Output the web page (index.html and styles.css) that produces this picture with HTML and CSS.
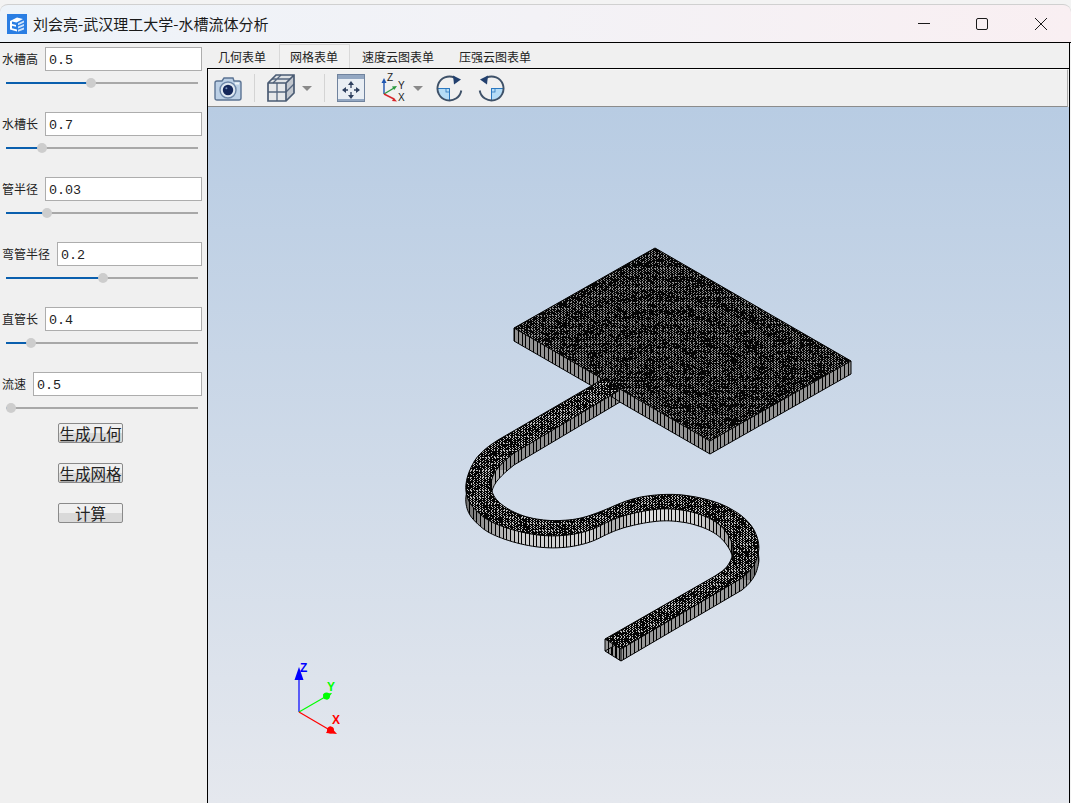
FILE: index.html
```html
<!DOCTYPE html>
<html lang="zh">
<head>
<meta charset="utf-8">
<title>水槽流体分析</title>
<link rel="stylesheet" href="styles.css">
</head>
<body>
<div class="window">
  <header class="titlebar">
    <svg class="app-icon" width="20" height="20" viewBox="0 0 20 20">
      <rect width="20" height="20" fill="#2a7ee3"/>
      <path d="M3 7 10 3.500 16 5 9.500 8.500 5 7.500V10l4 1v1.800l-4-1v2.400l5 1.300V17.500L3 15.500z" fill="#fff"/>
      <path d="M11 9.300 17 6.500V8.500L11 11.300zM11 12.500l6-2.500v2l-6 2.500zM11 15.800l6-2.300v2l-6 2.300z" fill="#cfe3fa"/>
    </svg>
    <span class="title">刘会亮-武汉理工大学-水槽流体分析</span>
    <div class="controls">
      <svg width="12" height="12" viewBox="0 0 12 12" class="ctl"><path d="M0 5.500H12" stroke="#1a1a1a" fill="none"/></svg>
      <svg width="12" height="12" viewBox="0 0 12 12" class="ctl"><rect x=".5" y=".5" width="11" height="11" rx="1.500" stroke="#1a1a1a" fill="none"/></svg>
      <svg width="12" height="12" viewBox="0 0 12 12" class="ctl"><path d="M0 0 12 12M12 0 0 12" stroke="#1a1a1a" fill="none"/></svg>
    </div>
  </header>
  <div class="content">
    <aside class="side">
      <div class="param">
        <div class="field"><label class="lbl">水槽高</label><div class="val">0.5</div></div>
        <div class="slider"><i class="fill" style="width:85px"></i><i class="thumb" style="left:80px"></i></div>
      </div>
      <div class="param">
        <div class="field"><label class="lbl">水槽长</label><div class="val">0.7</div></div>
        <div class="slider"><i class="fill" style="width:36px"></i><i class="thumb" style="left:31px"></i></div>
      </div>
      <div class="param">
        <div class="field"><label class="lbl">管半径</label><div class="val">0.03</div></div>
        <div class="slider"><i class="fill" style="width:41px"></i><i class="thumb" style="left:36px"></i></div>
      </div>
      <div class="param">
        <div class="field"><label class="lbl">弯管半径</label><div class="val">0.2</div></div>
        <div class="slider"><i class="fill" style="width:97px"></i><i class="thumb" style="left:92px"></i></div>
      </div>
      <div class="param">
        <div class="field"><label class="lbl">直管长</label><div class="val">0.4</div></div>
        <div class="slider"><i class="fill" style="width:25px"></i><i class="thumb" style="left:20px"></i></div>
      </div>
      <div class="param">
        <div class="field"><label class="lbl">流速</label><div class="val">0.5</div></div>
        <div class="slider"><i class="fill" style="width:5px"></i><i class="thumb" style="left:0"></i></div>
      </div>
      <div class="actions">
        <button class="btn">生成几何</button>
        <button class="btn">生成网格</button>
        <button class="btn">计算</button>
      </div>
    </aside>
    <main class="main">
      <nav class="tabs">
        <span class="tab">几何表单</span>
        <span class="tab active">网格表单</span>
        <span class="tab">速度云图表单</span>
        <span class="tab">压强云图表单</span>
      </nav>
      <section class="pane">
        <div class="toolbar">
          <svg class="ic cam" width="28" height="25" viewBox="0 0 28 25">
            <path d="M3 5h5l2-3h9l1 3h5q2 0 2 2v15q0 2-2 2H3q-2 0-2-2V7q0-2 2-2z" fill="#bcd0e6" stroke="#5b7393" stroke-width="1.400"/>
            <rect x="21" y="6.500" width="4" height="2" fill="#eef3f8"/>
            <circle cx="14" cy="14" r="8" fill="#dfe8f2" stroke="#6c86a8" stroke-width="1.400"/>
            <circle cx="14" cy="14" r="5.200" fill="#14275a"/>
            <circle cx="12.400" cy="12.200" r="1" fill="#7f96bd"/>
          </svg>
          <i class="sep s1"></i>
          <svg class="ic cube" width="28" height="28" viewBox="0 0 28 28">
            <path d="M1 9 9 1h18v18l-8 8H1z" fill="#dfe2e5"/>
            <path d="M1 9h18v18H1z" fill="#e6e8ea"/>
            <path d="M19 9l8-8v18l-8 8z" fill="#c2c7ce"/>
            <path d="M5 5h18M14 1 6 9M1 18h18M10 9v18M19 18l8-8" fill="none" stroke="#56677f" stroke-width="1.300"/>
            <path d="M1 9 9 1h18v18l-8 8H1zM1 9h18l8-8M19 9v18" fill="none" stroke="#4a5b73" stroke-width="1.700"/>
          </svg>
          <i class="drop d1"></i>
          <i class="sep s2"></i>
          <svg class="ic fit" width="28" height="28" viewBox="0 0 28 28">
            <rect x=".5" y=".5" width="27" height="27" fill="#e9eef4" stroke="#70839e"/>
            <rect x="1" y="1" width="26" height="4" fill="#93a7c2"/>
            <rect x="1" y="25" width="26" height="2" fill="#93a7c2"/>
            <path d="M14 9v5M14 18v5M6 16h5M17 16h5" stroke="#2e405f" stroke-width="1.300"/>
            <path d="M14 7l-3 4h6zM14 25l-3-4h6zM5 16l4-3v6zM23 16l-4-3v6z" fill="#2e405f"/>
          </svg>
          <svg class="ic axes" width="28" height="32" viewBox="0 -2 28 32">
            <path d="M3 20V8" stroke="#1f55b0" stroke-width="1.400"/><path d="M3 4 .500 9h5z" fill="#1f55b0"/>
            <path d="M3 20 13 14" stroke="#2b9a3f" stroke-width="1.400"/><path d="M16 12l-5 .4 2.200 3.600z" fill="#2b9a3f"/>
            <path d="M3 20l10 5" stroke="#d7262b" stroke-width="1.400"/><path d="M16 27.500l-5-.4 1.800-3.400z" fill="#d7262b"/>
            <text x="6" y="7" class="ax-t">Z</text><text x="17" y="15" class="ax-t">Y</text><text x="17" y="27" class="ax-t">X</text>
          </svg>
          <i class="drop d2"></i>
          <svg class="ic rot r1" width="27" height="27" viewBox="0 0 27 27">
            <path d="M13.500 13.500H1.500A12 12 0 0 0 13.500 25.500Z" fill="#b5dcf6"/>
            <path d="M13.500 13.500V25.500M1.500 13.500h12" stroke="#2b78c0" fill="none"/>
            <rect x="10" y="13.500" width="3.500" height="3.500" fill="none" stroke="#2b78c0" stroke-width=".8"/>
            <path d="M25.300 15.500A12 12 0 1 1 18.500 2.600" fill="none" stroke="#3e5168" stroke-width="1.900"/>
            <path d="M17 .5 25 4.500 18 9.500z" fill="#22406e"/>
          </svg>
          <svg class="ic rot r2" width="27" height="27" viewBox="0 0 27 27">
            <g transform="matrix(-1 0 0 1 27 0)">
              <path d="M13.500 13.500H1.500A12 12 0 0 0 13.500 25.500Z" fill="#b5dcf6"/>
              <path d="M13.500 13.500V25.500M1.500 13.500h12" stroke="#2b78c0" fill="none"/>
              <rect x="10" y="13.500" width="3.500" height="3.500" fill="none" stroke="#2b78c0" stroke-width=".8"/>
              <path d="M25.300 15.500A12 12 0 1 1 18.500 2.600" fill="none" stroke="#3e5168" stroke-width="1.900"/>
              <path d="M17 .5 25 4.500 18 9.500z" fill="#22406e"/>
            </g>
          </svg>
        </div>
        <div class="viewport">
          <svg class="scene" width="860" height="696" viewBox="208 107 860 696">
            <defs>
              <linearGradient id="sideShade" gradientUnits="userSpaceOnUse" x1="465" y1="0" x2="760" y2="0">
                <stop offset="0" stop-color="#707070"/>
                <stop offset=".1" stop-color="#a8a8a8"/>
                <stop offset=".2" stop-color="#cfcfcf"/>
                <stop offset=".42" stop-color="#cfcfcf"/>
                <stop offset=".5" stop-color="#a8a8a8"/>
                <stop offset=".62" stop-color="#dcdcdc"/>
                <stop offset=".78" stop-color="#d0d0d0"/>
                <stop offset=".9" stop-color="#a0a0a0"/>
                <stop offset=".97" stop-color="#707070"/>
                <stop offset="1" stop-color="#808080"/>
              </linearGradient>
              <clipPath id="clipRibbonTop"><path id="ribbonTopClip"/></clipPath>
              <clipPath id="clipRibbonSide"><path id="ribbonSideClip"/></clipPath>
              <clipPath id="clipPlateTop"><path d="M655 248 851 361 710 441 514 328Z"/></clipPath>
              <clipPath id="clipPlateSide"><path d="M514 328 710 441 851 361V374L710 454 514 341Z"/></clipPath>
            </defs>
            <path d="M514 328 710 441 851 361V374L710 454 514 341Z" fill="#929292"/>
            <g clip-path="url(#clipPlateSide)"><path id="plateStripes" class="wire"/></g>
            <path d="M514 328V341L710 454 851 374V361" class="edge"/>
            <path id="ribbonEnd" d="M605 639V651L621 661V649Z" fill="#989898"/>
            <path id="ribbonSide" fill="url(#sideShade)"/>
            <g clip-path="url(#clipRibbonSide)">
              <rect x="490" y="380" width="135" height="90" fill="#909090"/>
              <rect x="600" y="580" width="150" height="90" fill="#989898"/>
              <path id="ribbonStripes" class="wire"/>
            </g>
            <path id="endStripes" class="wire" d="M608.500 641V653M612.500 643V655M616.500 646V658"/>
            <path id="ribbonSideEdge" class="edge"/>
            <path id="ribbonTop" fill="#050505"/>
            <g clip-path="url(#clipRibbonTop)"><path id="ribbonDots" class="dots light"/></g>
            <path id="ribbonTopEdge" class="edge"/>
            <path d="M655 248 851 361 710 441 514 328Z" fill="#050505"/>
            <g clip-path="url(#clipPlateTop)"><path id="plateDots" class="dots"/></g>
            <path d="M655 248 851 361 710 441 514 328Z" class="edge"/>

            <path d="M299 712V678" stroke="#0000ff" stroke-width="1.200"/>
            <path d="M299 667 294.500 680h9z" fill="#0000ff"/>
            <text x="300" y="672" class="axis-label z">Z</text>
            <path d="M299 712 325 697" stroke="#00ff00" stroke-width="1.200"/>
            <path d="M332 693 323 694 327 700z" fill="#00ff00"/><circle cx="326.500" cy="696" r="3.500" fill="#00ff00"/>
            <text x="327" y="691" class="axis-label y">Y</text>
            <path d="M299 712 328 729" stroke="#ff0000" stroke-width="1.200"/>
            <path d="M337 734 326 733 330 726z" fill="#ff0000"/><circle cx="330.500" cy="730" r="3.500" fill="#ff0000"/>
            <text x="332" y="724" class="axis-label x">X</text>
          </svg>
        </div>
      </section>
    </main>
  </div>
</div>
<script src="mesh.js"></script>
</body>
</html>
```
FILE: styles.css
```css
* { box-sizing: border-box; }
html, body { margin: 0; padding: 0; height: 100%; overflow: hidden; background: #f3f3f3; }
body { font-family: "Noto Sans CJK SC", "Liberation Sans", sans-serif; color: #1a1a1a; }
.window { width: 1071px; height: 803px; padding-top: 4px; display: flex; flex-direction: column; }

.titlebar {
  height: 39px; flex: none; display: flex; align-items: center;
  border-top: 1px solid #d0d0d0; border-bottom: 1px solid #000;
  border-radius: 8px 8px 0 0;
  background: linear-gradient(90deg, #edf3f9 0%, #f3f2f6 50%, #f9eff2 100%);
  padding: 0 24px 0 7px;
}
.app-icon { flex: none; display: block; }
.title { margin-left: 6px; font-size: 15px; line-height: 20px; white-space: nowrap; }
.controls { margin-left: auto; display: flex; gap: 46px; }
.ctl { display: block; }
.ctl:last-child { margin-left: 1px; }

.content { flex: 1; display: flex; min-height: 0; width: 1070px; border-right: 1px solid #000; background: #f0f0f0; }
.side { width: 207px; flex: none; display: flex; flex-direction: column; padding-top: 3px; }
.param { height: 65px; flex: none; }
.field { display: flex; align-items: center; gap: 7px; padding: 0 5px 0 2px; height: 25px; }
.lbl { font-size: 12px; line-height: 24px; padding-top: 1px; white-space: nowrap; color: #222; }
.val {
  flex: 1; height: 24px; background: #fff; border: 1px solid #adadad;
  font-family: "Liberation Mono", monospace; font-size: 13.400px; line-height: 25px;
  padding-left: 3px; color: #222;
}
.slider { position: relative; margin: 11px 9px 0 6px; height: 2px; background: #a8a8a8; }
.fill { position: absolute; left: 0; top: 0; height: 2px; background: #0a5fae; }
.thumb { position: absolute; top: -4px; width: 10px; height: 10px; border-radius: 50%; background: #cdcdcd; }
.actions { display: flex; flex-direction: column; align-items: center; gap: 20px; margin-top: -13px; width: 181px; }
.btn {
  width: 65px; height: 20px; padding: 0; border: 1px solid #8a8a8a; border-radius: 2px;
  background: linear-gradient(180deg, #f0f0f0 0 50%, #d9d9d9 50% 100%);
  font-family: "Noto Sans CJK SC", sans-serif; font-size: 15.500px; line-height: 18px; color: #222;
}

.main { flex: 1; min-width: 0; display: flex; flex-direction: column; }
.tabs { height: 25px; flex: none; display: flex; align-items: flex-end; font-size: 12px; }
.tab { height: 24px; padding: 0 12px 0 11px; margin-right: 1px; line-height: 26px; white-space: nowrap; color: #222; }
.tab.active { border: 1px solid #d9d9d9; border-bottom: 0; padding: 0 11px 0 10px; background: #f2f2f2; line-height: 24px; }
.tab:last-child { margin-left: 1px; }

.pane { flex: 1; min-height: 0; display: flex; flex-direction: column; border-top: 1px solid #000; border-left: 1px solid #000; }
.toolbar {
  height: 38px; flex: none; display: flex; align-items: center;
  background: #f0f0f0; border-top: 1px solid #fafafa; border-bottom: 1px solid #8c8c8c; border-right: 1px solid #aaa; margin-right: 1px;
  padding-left: 6px;
}
.ic { display: block; flex: none; }
.sep { display: block; width: 1px; height: 28px; background: #d4d4d4; flex: none; }
.drop { display: block; width: 0; height: 0; flex: none; border-left: 5.500px solid transparent; border-right: 5.500px solid transparent; border-top: 5.500px solid #8a8a8a; }
.s1 { margin-left: 12px; }
.cube { margin-left: 12px; }
.d1 { margin-left: 7px; }
.s2 { margin-left: 12px; }
.fit { margin-left: 12px; }
.axes { margin-left: 16px; }
.d2 { margin-left: 4px; }
.r1 { margin-left: 13px; }
.r2 { margin-left: 15px; }
.ax-t { font-family: "Liberation Sans", sans-serif; font-size: 10px; fill: #222; }

.viewport { flex: 1; min-height: 0; overflow: hidden; background: linear-gradient(180deg, #b8cce3 0%, #e5e8ee 100%); }
.scene { display: block; }
.wire { fill: none; stroke: #000; stroke-width: 1; shape-rendering: crispEdges; }
.dots { fill: none; stroke: #8c8c8c; stroke-width: 1; shape-rendering: crispEdges; }
.dots.light { stroke: #bdbdbd; }
.edge { fill: none; stroke: #000; stroke-width: 1; }
.axis-label { font-family: "Liberation Sans", sans-serif; font-weight: 700; font-size: 12px; }
.axis-label.z { fill: #0000ff; }
.axis-label.y { fill: #00ff00; }
.axis-label.x { fill: #ff0000; }
```
FILE: mesh.js
```js
(function () {
  function chaikin(p, n) {
    for (var k = 0; k < n; k++) {
      var q = [p[0]];
      for (var i = 0; i < p.length - 1; i++) {
        var a = p[i], b = p[i + 1];
        if (i > 0) q.push([a[0] * .75 + b[0] * .25, a[1] * .75 + b[1] * .25]);
        if (i < p.length - 2) q.push([a[0] * .25 + b[0] * .75, a[1] * .25 + b[1] * .75]);
      }
      q.push(p[p.length - 1]);
      p = q;
    }
    return p;
  }
  var curveA = [[498,440],[486,448],[474,460],[465,482],[467,500],[478,513],[492,523],[522,533],[555,537],[588,532],[615,518],[642,511],[668,508],[695,512],[718,522],[731,538],[734,553],[727,568],[715,576]];
  var curveB = [[742,578],[750,571],[757,560],[760,543],[750,521],[722,503],[688,495],[662,494],[632,498],[598,513],[575,520],[545,521],[518,515],[497,502],[490,488],[493,474],[502,463],[514,453]];
  var outline = [[603,379]].concat(chaikin(curveA, 3), [[605,639],[621,649]], chaikin(curveB, 3), [[620,390]]);
  function d(pts, dy, close) {
    return pts.map(function (p, i) { return (i ? "L" : "M") + p[0].toFixed(1) + " " + (p[1] + dy).toFixed(1); }).join("") + (close ? "Z" : "");
  }
  function set(id, v) { document.getElementById(id).setAttribute("d", v); }
  var top = d(outline, 0, true), side = d(outline, 12, true);
  set("ribbonTop", top); set("ribbonTopClip", top); set("ribbonTopEdge", top);
  set("ribbonSide", side); set("ribbonSideClip", side); set("ribbonSideEdge", side + "M605 639V651M621 649V661");

  function stripes(x0, x1, y0, y1, step) {
    var s = "";
    for (var x = x0; x <= x1; x += step) { var r = Math.round(x) + .5; s += "M" + r + " " + y0 + "V" + y1; }
    return s;
  }
  set("plateStripes", stripes(514, 851, 320, 460, 3.75));
  set("ribbonStripes", stripes(465, 762, 380, 665, 3.75));

  /* Mesh holes: the few pixels that black mesh lines leave open, on an isometric lattice.
     A slow ring field thins them into the darker bands of the original. */
  function hash(i, j) { var h = Math.sin(i * 12.9898 + j * 78.233) * 43758.5453; return h - Math.floor(h); }
  function holes(cx, cy, x0, x1, y0, y1, sx, sy, keep) {
    var s = "";
    for (var i = -220; i <= 220; i++) {
      for (var j = -220; j <= 220; j++) {
        var x = cx + (i - j) * sx, y = cy + (i + j) * sy;
        if (x < x0 || x > x1 || y < y0 || y > y1) continue;
        var r = Math.hypot(x - cx, (y - cy) * 1.7);
        var band = .5 + .5 * Math.sin(r * .22 + Math.atan2(y - cy, x - cx) * 3);
        if (hash(i, j) > keep + (1 - keep) * band * .6) continue;
        s += "M" + Math.round(x) + " " + (Math.round(y) + .5) + "h1";
      }
    }
    return s;
  }
  set("plateDots", holes(682, 372, 510, 855, 245, 445, 1.5, .87, .5));
  set("ribbonDots", holes(612, 500, 460, 765, 375, 655, 1.5, .87, .55));
})();
```
